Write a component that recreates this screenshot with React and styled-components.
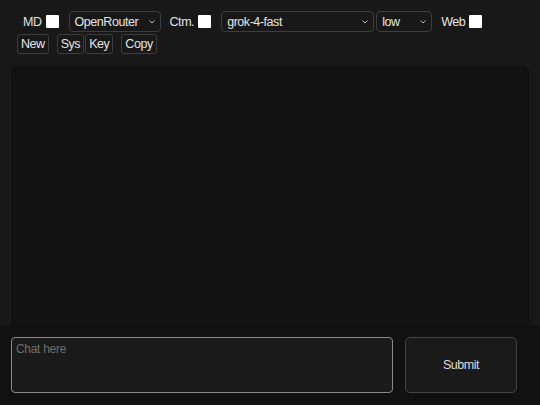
import styled, { createGlobalStyle } from "styled-components";

const GlobalStyle = createGlobalStyle`
  html, body {
    margin: 0;
    height: 100%;
    background: #181818;
    color: #e2e2e2;
    font-family: "Liberation Sans", Arial, sans-serif;
    font-size: 12.5px;
    letter-spacing: -0.45px;
  }
  #root {
    height: 100%;
  }
`;

const Page = styled.div`
  display: flex;
  flex-direction: column;
  height: 100vh;
  overflow: hidden;
`;

const Toolbar = styled.div`
  display: flex;
  flex-direction: column;
  gap: 2px;
  padding: 11px 0 11px 17px;
`;

const Row = styled.div`
  display: flex;
  align-items: center;
  height: ${(p) => p.$h || 21}px;
`;

const Label = styled.span`
  margin-left: ${(p) => p.$ml || 0}px;
  margin-right: 4px;
  color: #e2e2e2;
`;

const Check = styled.span`
  display: inline-block;
  width: 13px;
  height: 13px;
  background: #ffffff;
  border-radius: 1px;
  margin-right: ${(p) => p.$mr || 0}px;
`;

const SelectBox = styled.div`
  position: relative;
  display: flex;
  align-items: center;
  box-sizing: border-box;
  width: ${(p) => p.$w}px;
  height: 21px;
  padding-left: 5px;
  margin-right: ${(p) => p.$mr || 0}px;
  border: 1px solid #3d3d3d;
  border-radius: 4px;
  background: #181818;
  color: #e4e4e4;
`;

const Chevron = styled.svg`
  position: absolute;
  right: 5px;
  top: 8px;
`;

const Button = styled.div`
  box-sizing: border-box;
  height: 20px;
  padding: 0 3px;
  margin-right: ${(p) => p.$mr || 0}px;
  display: flex;
  align-items: center;
  border: 1px solid #3d3d3d;
  border-radius: 3px;
  background: #181818;
  color: #e4e4e4;
`;

const ChatPanel = styled.div`
  flex: 1;
  margin: 0 11px;
  background: #121212;
  border-radius: 8px 8px 0 0;
`;

const Footer = styled.div`
  display: flex;
  gap: 12px;
  height: 79px;
  box-sizing: border-box;
  padding: 11px 23px 12px 11px;
  background: #111111;
`;

const ChatInput = styled.textarea`
  flex: 1;
  box-sizing: border-box;
  height: 56px;
  resize: none;
  padding: 4px 4px;
  border: 1px solid #8a8a8a;
  border-radius: 4px;
  background: #1a1a1a;
  color: #dddddd;
  font-family: "Liberation Sans", Arial, sans-serif;
  font-size: 12px;
  letter-spacing: -0.3px;
  outline: none;
  &::placeholder {
    color: #6e6e6e;
  }
`;

const Submit = styled.div`
  width: 112px;
  height: 56px;
  box-sizing: border-box;
  display: flex;
  align-items: center;
  justify-content: center;
  border: 1px solid #444444;
  border-radius: 5px;
  background: #1a1a1a;
  color: #dddddd;
`;

const Select = ({ w, mr, children }) => (
  <SelectBox $w={w} $mr={mr}>
    {children}
    <Chevron width="6" height="4" viewBox="0 0 6 4">
      <path d="M0.5 0.5 L3 3 L5.5 0.5" fill="none" stroke="#bbbbbb" strokeWidth="1" />
    </Chevron>
  </SelectBox>
);

export default function App() {
  return (
    <Page>
      <GlobalStyle />
      <Toolbar>
        <Row>
          <Label $ml={6}>MD</Label>
          <Check $mr={10} />
          <Select w={92} mr={9}>OpenRouter</Select>
          <Label>Ctm.</Label>
          <Check $mr={10} />
          <Select w={153} mr={2}>grok-4-fast</Select>
          <Select w={56} mr={9}>low</Select>
          <Label>Web</Label>
          <Check />
        </Row>
        <Row $h={20}>
          <Button $mr={8}>New</Button>
          <Button $mr={1}>Sys</Button>
          <Button $mr={8}>Key</Button>
          <Button>Copy</Button>
        </Row>
      </Toolbar>
      <ChatPanel />
      <Footer>
        <ChatInput placeholder="Chat here" autoFocus />
        <Submit>Submit</Submit>
      </Footer>
    </Page>
  );
}
